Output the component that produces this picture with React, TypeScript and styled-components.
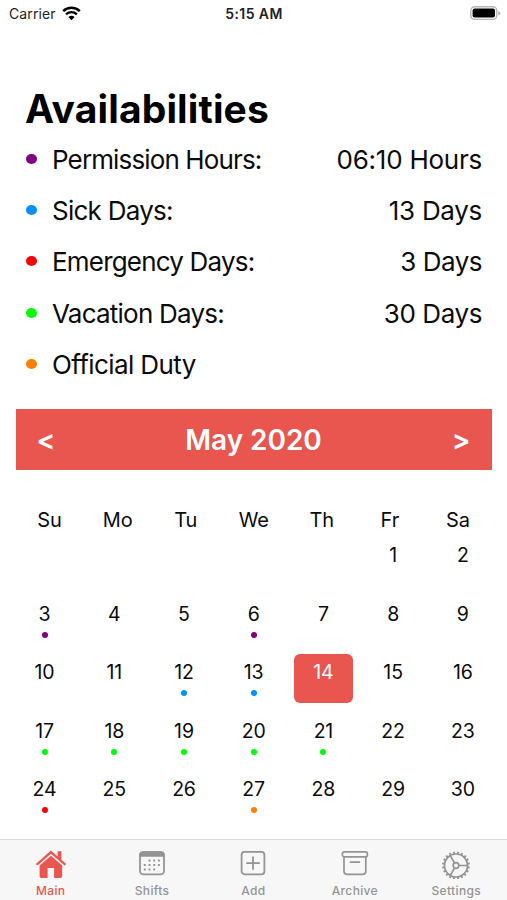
import React from "react";
import styled, { createGlobalStyle } from "styled-components";

const RED = "#e8564f";
const GREY = "#949494";

const GlobalStyle = createGlobalStyle`
  * { box-sizing: border-box; }
  body { margin: 0; background: #fff; overflow: hidden; }
`;

const Screen = styled.div`
  width: 507px;
  height: 900px;
  display: flex;
  flex-direction: column;
  background: #fff;
  color: #0b0b0b;
  font-family: Inter, "Liberation Sans", sans-serif;
  white-space: nowrap;
`;

const StatusBar = styled.header`
  height: 28px;
  padding: 0 6px 0 9px;
  display: grid;
  grid-template-columns: 1fr auto 1fr;
  align-items: center;
  color: #222;
`;

const Carrier = styled.div`
  display: flex;
  align-items: center;
  gap: 6px;
  margin-top: -2px;
  font-size: 14px;
  letter-spacing: 0.1px;
`;

const Clock = styled.div`
  font-size: 14px;
  font-weight: 600;
  letter-spacing: 0.4px;
  margin: -2px 2px 0 0;
`;

const BatteryIcon = styled.svg`
  justify-self: end;
  margin-top: -2px;
`;

const Title = styled.h1`
  margin: 57px 0 0 25px;
  height: 48px;
  line-height: 48px;
  font-size: 39px;
  font-weight: 700;
  letter-spacing: 0.13px;
  color: #000;
`;

const Legend = styled.ul`
  list-style: none;
  margin: 0.6px 0 0;
  padding: 0 25px 0 26px;
`;

const LegendRow = styled.li`
  height: 51.3px;
  display: flex;
  align-items: center;
  font-size: 26px;
`;

const LegendDot = styled.span<{ $color: string }>`
  width: 11px;
  height: 10px;
  border-radius: 50%;
  margin: -1px 15px 0 0;
  background: ${(p) => p.$color};
`;

const Label = styled.span<{ $spacing: number }>`
  letter-spacing: ${(p) => p.$spacing}px;
`;

const Amount = styled.span<{ $spacing: number }>`
  margin-left: auto;
  letter-spacing: ${(p) => p.$spacing}px;
`;

const MonthBar = styled.div`
  margin: 19.4px 15px 0 16px;
  height: 61px;
  padding: 1px 21.5px 0 20.5px;
  display: flex;
  align-items: center;
  justify-content: space-between;
  background: ${RED};
  color: #fff;
  font-size: 28px;
  font-weight: 600;
`;

const MonthName = styled.span`
  letter-spacing: -0.05px;
`;

const Weekdays = styled.div`
  margin: 36px 15px 0 15.5px;
  height: 27px;
  display: grid;
  grid-template-columns: repeat(7, 1fr);
  align-items: center;
  text-align: center;
  font-size: 20px;
  letter-spacing: -0.1px;
`;

const Month = styled.div`
  width: 488px;
  margin: 3.6px 0 0 9.7px;
  display: grid;
  grid-template-columns: repeat(7, 1fr);
  grid-auto-rows: 48.6px;
  row-gap: 10px;
  justify-items: center;
`;

const Day = styled.div<{ $selected?: boolean }>`
  width: 58.6px;
  height: 48.6px;
  padding-top: 5px;
  display: flex;
  flex-direction: column;
  align-items: center;
  gap: 5px;
  border-radius: 6px;
  font-size: 19.5px;
  letter-spacing: -0.15px;
  line-height: 26px;
  background: ${(p) => (p.$selected ? RED : "transparent")};
  color: ${(p) => (p.$selected ? "#fff" : "inherit")};
`;

const Marker = styled.span<{ $color: string }>`
  width: 6px;
  height: 6px;
  border-radius: 50%;
  background: ${(p) => p.$color};
`;

const TabBar = styled.nav`
  margin-top: auto;
  height: 61px;
  display: grid;
  grid-template-columns: repeat(5, 1fr);
  border-top: 1px solid #dcdcdc;
  background: #f7f7f7;
`;

const Tab = styled.div<{ $active?: boolean }>`
  display: flex;
  flex-direction: column;
  align-items: center;
  padding: 9px 0 0;
  color: ${(p) => (p.$active ? RED : GREY)};
  font-size: 12px;
  font-weight: 500;
  letter-spacing: 0.35px;
  line-height: 15px;

  svg { margin-bottom: 4px; }
`;

const PURPLE = "#800080";
const BLUE = "#0091ff";
const PURE_RED = "#ff0000";
const GREEN = "#00ff00";
const ORANGE = "#ff8000";

const legend = [
  { label: "Permission Hours:", amount: "06:10 Hours", color: PURPLE, ls: -0.87, as: -0.24 },
  { label: "Sick Days:", amount: "13 Days", color: BLUE, ls: -0.75, as: -0.3 },
  { label: "Emergency Days:", amount: "3 Days", color: PURE_RED, ls: -0.81, as: -0.5 },
  { label: "Vacation Days:", amount: "30 Days", color: GREEN, ls: -0.77, as: -0.42 },
  { label: "Official Duty", amount: "", color: ORANGE, ls: -0.6, as: -0.3 },
];

const markers: Record<number, string> = {
  3: PURPLE, 6: PURPLE, 12: BLUE, 13: BLUE,
  17: GREEN, 18: GREEN, 19: GREEN, 20: GREEN, 21: GREEN,
  24: PURE_RED, 27: ORANGE,
};

const FIRST_WEEKDAY = 5;
const days = Array.from({ length: 35 }, (_, i) => i + 1 - FIRST_WEEKDAY);

const Wifi = () => (
  <svg width="19" height="15" viewBox="0 0 19 15" fill="none" stroke="#000">
    <path d="M1.2 5.1a12 12 0 0 1 16.6 0" strokeWidth="2.5" />
    <path d="M4.1 8.3a7.8 7.8 0 0 1 10.8 0" strokeWidth="2.3" />
    <path d="M9.5 14.2 6.4 11a4.4 4.4 0 0 1 6.2 0z" fill="#000" stroke="none" />
  </svg>
);

const Battery = () => (
  <BatteryIcon width="32" height="16" viewBox="0 0 32 16">
    <rect x="1.8" y="1.8" width="26" height="12.6" rx="3.8" fill="#fff" stroke="#b5b5b5" strokeWidth="1.4" />
    <rect x="3.6" y="3.6" width="22.4" height="9" rx="2" fill="#000" />
    <path d="M29.4 6v4.4q1.9-.7 1.9-2.2t-1.9-2.2z" fill="#aaa" />
  </BatteryIcon>
);

const HomeIcon = () => (
  <svg width="32" height="30" viewBox="0 0 32 30" fill="currentColor">
    <path d="M16 1.6 .8 14.9l1.6 1.7L16 4.8l13.6 11.8 1.6-1.7-4.8-4.2V2.2h-3.8v5.2z" />
    <path d="M16 6.8 4.6 16.6v10.7q0 1.8 1.8 1.8h6.2v-10h6.5v10h6.3q1.8 0 1.8-1.8V16.6z" />
  </svg>
);

const ShiftsIcon = () => (
  <svg width="28" height="30" viewBox="0 0 28 30" fill="currentColor">
    <rect x="2" y="3.2" width="24" height="22.2" rx="3.4" fill="none" stroke="currentColor" strokeWidth="1.8" />
    <path d="M1.2 7.8V6.2Q1.2 2.3 5 2.3h18q3.8 0 3.8 3.9v1.6z" />
    {[[10.5, 11.2], [15.2, 11.2], [19.9, 11.2], [5.8, 15.6], [10.5, 15.6], [15.2, 15.6], [19.9, 15.6], [5.8, 20], [10.5, 20], [15.2, 20]].map(
      ([x, y]) => <rect key={`${x}-${y}`} x={x} y={y - 0.6} width="2" height="2" rx="0.5" />
    )}
  </svg>
);

const AddIcon = () => (
  <svg width="28" height="30" viewBox="0 0 28 30" fill="none" stroke="currentColor" strokeWidth="1.8">
    <rect x="2.6" y="2.9" width="22.8" height="22.4" rx="3" />
    <path d="M14 8.1v12M7.9 14.1h12.2" strokeLinecap="round" />
  </svg>
);

const ArchiveIcon = () => (
  <svg width="28" height="30" viewBox="0 0 28 30" fill="none" stroke="currentColor" strokeWidth="1.7">
    <rect x="1.4" y="2.9" width="25" height="4.9" rx="1.8" />
    <path d="M3 7.8v14.5q0 3 3 3h15.8q3 0 3-3V7.8M9.4 13.1h9" strokeLinecap="round" />
  </svg>
);

const GearIcon = () => (
  <svg width="30" height="30" viewBox="0 0 30 30" fill="none" stroke="currentColor" strokeWidth="1.7">
    <circle cx="15" cy="16.5" r="11.5" />
    <circle cx="15" cy="16.5" r="2.8" />
    <path d="M17.8 16.5h8.7M13.6 14.1 9.2 6.5M13.6 18.9l-4.4 7.6" />
    {Array.from({ length: 20 }, (_, i) => (
      <path key={i} d="M15 5V2.6" strokeWidth="1.9" transform={`rotate(${i * 18 + 9} 15 16.5)`} />
    ))}
  </svg>
);

const tabs = [
  { name: "Main", Icon: HomeIcon },
  { name: "Shifts", Icon: ShiftsIcon },
  { name: "Add", Icon: AddIcon },
  { name: "Archive", Icon: ArchiveIcon },
  { name: "Settings", Icon: GearIcon },
];

export default function App() {
  return (
    <Screen>
      <GlobalStyle />
      <StatusBar>
        <Carrier>Carrier <Wifi /></Carrier>
        <Clock>5:15 AM</Clock>
        <Battery />
      </StatusBar>
      <Title>Availabilities</Title>
      <Legend>
        {legend.map((row) => (
          <LegendRow key={row.label}>
            <LegendDot $color={row.color} />
            <Label $spacing={row.ls}>{row.label}</Label>
            <Amount $spacing={row.as}>{row.amount}</Amount>
          </LegendRow>
        ))}
      </Legend>
      <MonthBar>
        <span>&lt;</span>
        <MonthName>May 2020</MonthName>
        <span>&gt;</span>
      </MonthBar>
      <Weekdays>
        {["Su", "Mo", "Tu", "We", "Th", "Fr", "Sa"].map((d) => <span key={d}>{d}</span>)}
      </Weekdays>
      <Month>
        {days.map((d) => (
          <Day key={d} $selected={d === 14}>
            {d > 0 && d}
            {markers[d] && <Marker $color={markers[d]} />}
          </Day>
        ))}
      </Month>
      <TabBar>
        {tabs.map(({ name, Icon }, i) => (
          <Tab key={name} $active={i === 0}>
            <Icon />
            {name}
          </Tab>
        ))}
      </TabBar>
    </Screen>
  );
}
